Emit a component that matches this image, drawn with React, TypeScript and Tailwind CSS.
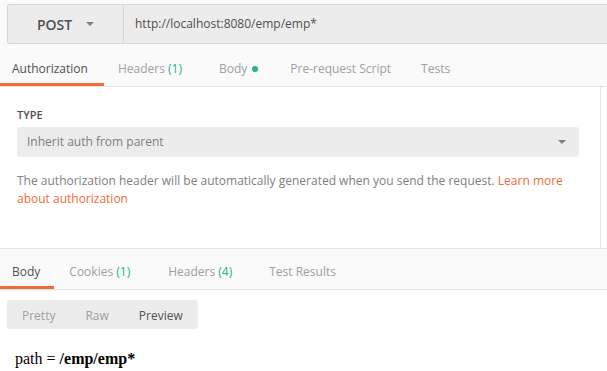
import React from "react";

const font = { fontFamily: '"Open Sans", "Liberation Sans", sans-serif' };

const Caret = ({ className = "" }: { className?: string }) => (
  <svg width="8" height="4" viewBox="0 0 8 4" className={className}>
    <path d="M0 0 H8 L4 4 Z" fill="#808080" />
  </svg>
);

const Count = ({ n }: { n: number }) => (
  <span className="text-[#26b47f]">({n})</span>
);

const App = () => {
  return (
    <div className="w-[607px] h-[371px] overflow-hidden bg-white text-[12px]" style={font}>
      {/* request bar */}
      <div className="bg-[#fafafa] pt-[4px]">
        <div className="ml-[7px] h-[40px] flex border border-r-0 border-[#d6d6d6] rounded-l-[3px] bg-[#ececec]">
          <div className="w-[116px] flex items-center justify-center gap-[14px] border-r border-[#d6d6d6]">
            <span className="text-[14px] font-semibold text-[#505050]">POST</span>
            <Caret />
          </div>
          <div className="flex items-center pl-[11px] text-[12px] text-[#505050]">
            http://localhost:8080/emp/emp*
          </div>
        </div>

        {/* request tabs */}
        <div className="flex h-[43px] border-b border-[#e4e4e4]">
          <div className="pl-[12px] pr-[16px] pt-[16px] leading-[18px] border-b-[3px] border-[#f26b3a] text-[#505050]">
            Authorization
          </div>
          <div className="pl-[14px] pr-[15px] pt-[16px] leading-[18px] text-[#a0a0a0]">
            Headers <Count n={1} />
          </div>
          <div className="pl-[22px] pr-[20px] pt-[16px] leading-[18px] text-[#a0a0a0] flex items-start gap-[5px]">
            Body
            <span className="mt-[6px] w-[6px] h-[6px] rounded-full bg-[#26b47f]" />
          </div>
          <div className="pl-[12px] pr-[11px] pt-[16px] leading-[18px] text-[#a0a0a0]">
            Pre-request Script
          </div>
          <div className="px-[19px] pt-[16px] leading-[18px] text-[#a0a0a0]">Tests</div>
        </div>
      </div>

      {/* auth panel */}
      <div className="flex h-[161px]">
        <div className="w-[601px] border-r border-[#e4e4e4] pl-[17px] pr-[21px] pt-[20px]">
          <div className="text-[11px] font-semibold text-[#505050] leading-[16px]">TYPE</div>
          <div className="mt-[4px] h-[30px] rounded-[3px] bg-[#ececec] flex items-center justify-between pl-[10px] pr-[13px] text-[#808080]">
            <span>Inherit auth from parent</span>
            <Caret />
          </div>
          <p className="mt-[15px] leading-[18px] text-[#808080]">
            The authorization header will be automatically generated when you send the request.{" "}
            <span className="text-[#f26b3a]">Learn more about authorization</span>
          </p>
        </div>
      </div>

      {/* response tabs */}
      <div className="bg-[#fafafa] border-t border-b border-[#e4e4e4] flex h-[42px]">
        <div className="pl-[12px] pr-[14px] pt-[14px] leading-[18px] border-b-[3px] border-[#f26b3a] text-[#505050]">
          Body
        </div>
        <div className="pl-[15px] pr-[19px] pt-[14px] leading-[18px] text-[#a0a0a0]">
          Cookies <Count n={1} />
        </div>
        <div className="pl-[19px] pr-[18px] pt-[14px] leading-[18px] text-[#a0a0a0]">
          Headers <Count n={4} />
        </div>
        <div className="pl-[19px] pt-[14px] leading-[18px] text-[#a0a0a0]">Test Results</div>
      </div>

      {/* response body */}
      <div className="pl-[7px] pt-[10px]">
        <div className="inline-flex h-[29px] items-center pt-[2px] rounded-[3px] bg-[#ececec]">
          <span className="px-[15px] text-[#a0a0a0]">Pretty</span>
          <span className="px-[15px] text-[#a0a0a0]">Raw</span>
          <span className="px-[15px] text-[#505050]">Preview</span>
        </div>
        <div
          className="pl-[8px] mt-[20px] text-[16px] text-black leading-[20px]"
          style={{ fontFamily: '"Liberation Serif", "Times New Roman", serif' }}
        >
          path = <b>/emp/emp*</b>
        </div>
      </div>
    </div>
  );
};

export default App;
